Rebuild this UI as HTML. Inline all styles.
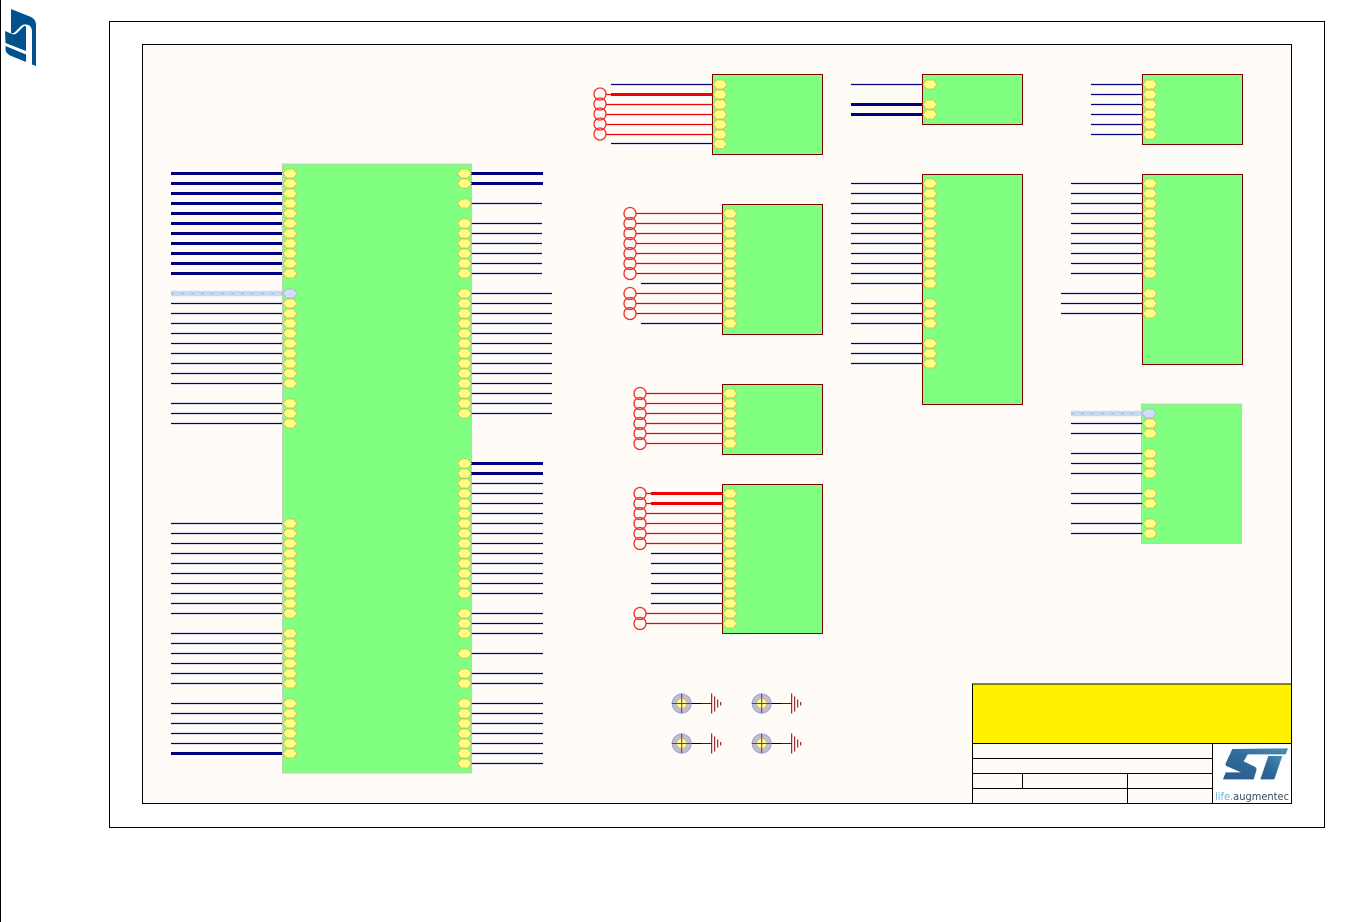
<!DOCTYPE html>
<html><head><meta charset="utf-8"><title>Schematic</title>
<style>html,body{margin:0;padding:0;background:#fff;width:1361px;height:922px;overflow:hidden}svg{display:block}</style></head>
<body>
<svg width="1361" height="922" viewBox="0 0 1361 922" xmlns="http://www.w3.org/2000/svg" fill="none">
<defs>
<linearGradient id="g" x1="0" y1="1" x2="1" y2="0"><stop offset="0" stop-color="#2a5a8a"/><stop offset=".5" stop-color="#2f6c9c"/><stop offset="1" stop-color="#4a8fb4"/></linearGradient>
<path id="p" d="M283 0l3.500-4.500h7l3.500 4.500-3.500 4.500h-7z" fill="#ffff80" stroke="#d4b860" stroke-width=".8"/>
<g id="a2"><use href="#p"/><use href="#p" y="10"/></g>
<g id="a3"><use href="#a2"/><use href="#p" y="20"/></g>
<g id="a5"><use href="#a3"/><use href="#a2" y="30"/></g>
<g id="a6"><use href="#a5"/><use href="#p" y="50"/></g>
<g id="a10"><use href="#a5"/><use href="#a5" y="50"/></g>
<g id="c5"><circle cx="0" cy="0" r="6"/><circle cx="0" cy="10" r="6"/><circle cx="0" cy="20" r="6"/><circle cx="0" cy="30" r="6"/><circle cx="0" cy="40" r="6"/></g>
<g id="gnd">
<circle cx="0" cy="0" r="9.500" fill="#c0c0c0" stroke="#a0a0ec"/>
<circle cx="0" cy="0" r="4.500" fill="#ffff90"/>
<path d="M-10 0H10M0-10V10" stroke="#e01010"/>
<path d="M10 0H20" stroke="#000"/><path d="M20 0H30" stroke="#800000"/>
<path d="M30-10V10M33-7V8M36-4V4M39-1.500V2" stroke="#800000" stroke-width="1"/>
</g>
</defs>
<rect x="0" y="0" width="1" height="922" fill="#000"/>
<rect x="109.500" y="21.500" width="1215" height="806" fill="#fff" stroke="#000"/>
<rect x="142.500" y="44.500" width="1149" height="759" fill="#fffcf8" stroke="#000"/>

<!-- corner logo -->
<g fill="#00528c">
<path d="M11 9L31 17Q36 19.500 36 25V66L32 64.500V32Q32 25 26 24.500Q23 24 20 27L15 32Q13 34 11 33Z"/>
<path d="M5 31L12 34Q15 35 17 33L24 26Q26 25 26 28V51L5.500 43Z"/>
<path d="M5.500 46L26 54.500V62L10 55.500Q5.500 53 5.500 49Z"/>
</g>

<!-- blocks -->
<rect x="282.500" y="164" width="189" height="609" fill="#80ff80" stroke="#c0d0b0"/>
<g fill="#80ff80" stroke="#800000">
<rect x="712.500" y="74.500" width="110" height="80"/>
<rect x="722.500" y="204.500" width="100" height="130"/>
<rect x="722.500" y="384.500" width="100" height="70"/>
<rect x="722.500" y="484.500" width="100" height="149"/>
<rect x="922.500" y="74.500" width="100" height="50"/>
<rect x="922.500" y="174.500" width="100" height="230"/>
<rect x="1142.500" y="74.500" width="100" height="70"/>
<rect x="1142.500" y="174.500" width="100" height="190"/>
</g>
<rect x="1141.500" y="404" width="100" height="139.500" fill="#80ff80" stroke="#c0d0b0"/>

<!-- navy thick wires -->
<path stroke="#000080" stroke-width="3" d="M171 173.500h111m-111 10h111m-111 10h111m-111 10h111m-111 10h111m-111 10h111m-111 10h111m-111 10h111m-111 10h111m-111 10h111m-111 10h111M171 753.500h111M471 173.500h72m-72 10h72M471 463.500h72m-72 10h72M851 104.500h71m-71 10h71"/>
<!-- navy thin wires -->
<path stroke="#000080" stroke-width="1.300" d="M171 303.500h111m-111 10h111m-111 10h111m-111 10h111m-111 10h111m-111 10h111m-111 10h111m-111 10h111m-111 10h111M171 403.500h111m-111 10h111m-111 10h111
M171 523.500h111m-111 10h111m-111 10h111m-111 10h111m-111 10h111m-111 10h111m-111 10h111m-111 10h111m-111 10h111m-111 10h111
M171 633.500h111m-111 10h111m-111 10h111m-111 10h111m-111 10h111m-111 10h111M171 703.500h111m-111 10h111m-111 10h111m-111 10h111m-111 10h111
M471 203.500h71M471 223.500h71m-71 10h71m-71 10h71m-71 10h71m-71 10h71m-71 10h71
M471 293.500h81m-81 10h81m-81 10h81m-81 10h81m-81 10h81m-81 10h81m-81 10h81m-81 10h81m-81 10h81m-81 10h81m-81 10h81m-81 10h81m-81 10h81
M471 483.500h72m-72 10h72m-72 10h72m-72 10h72m-72 10h72m-72 10h72m-72 10h72m-72 10h72m-72 10h72m-72 10h72m-72 10h72m-72 10h72
M471 613.500h72m-72 10h72m-72 10h72M471 653.500h72M471 673.500h72m-72 10h72M471 703.500h72m-72 10h72m-72 10h72m-72 10h72m-72 10h72m-72 10h72m-72 10h72
M611 84.500h101M611 143.500h101
M641 283.500h81M641 323.500h81
M651 553.500h71m-71 10h71m-71 10h71m-71 10h71m-71 10h71m-71 10h71
M851 84.500h71
M851 183.500h71m-71 10h71m-71 10h71m-71 10h71m-71 10h71m-71 10h71m-71 10h71m-71 10h71m-71 10h71m-71 10h71m-71 10h71
M851 303.500h71m-71 10h71m-71 10h71M851 343.500h71m-71 10h71m-71 10h71
M1091 84.500h51m-51 10h51m-51 10h51m-51 10h51m-51 10h51m-51 10h51
M1071 183.500h71m-71 10h71m-71 10h71m-71 10h71m-71 10h71m-71 10h71m-71 10h71m-71 10h71m-71 10h71m-71 10h71
M1061 293.500h81m-81 10h81m-81 10h81
M1071 423.500h71m-71 10h71M1071 453.500h71m-71 10h71m-71 10h71M1071 493.500h71m-71 10h71M1071 523.500h71m-71 10h71"/>
<!-- red wires -->
<path stroke="#f00000" stroke-width="3" d="M611 94.500h101M651 493.500h71M651 503.500h71"/>
<path stroke="#f00000" stroke-width="1.300" d="M606 94.500h5M606 104.500h106m-106 10h106m-106 10h106m-106 10h106
M636 213.500h86m-86 10h86m-86 10h86m-86 10h86m-86 10h86m-86 10h86m-86 10h86M636 293.500h86m-86 10h86m-86 10h86
M646 393.500h76m-76 10h76m-76 10h76m-76 10h76m-76 10h76m-76 10h76
M646 493.500h5m-5 10h5M646 513.500h76m-76 10h76m-76 10h76m-76 10h76M646 613.500h76m-76 10h76"/>
<!-- red circles -->
<g stroke="#f03030" stroke-width="1.300">
<use href="#c5" x="600" y="94"/>
<use href="#c5" x="630" y="213.500"/><circle cx="630" cy="263.500" r="6"/><circle cx="630" cy="273.500" r="6"/>
<circle cx="630" cy="293.500" r="6"/><circle cx="630" cy="303.500" r="6"/><circle cx="630" cy="313.500" r="6"/>
<use href="#c5" x="640" y="393.500"/><circle cx="640" cy="443.500" r="6"/>
<use href="#c5" x="640" y="493.500"/><circle cx="640" cy="543.500" r="6"/>
<circle cx="640" cy="613.500" r="6"/><circle cx="640" cy="623.500" r="6"/>
</g>

<!-- buses -->
<path stroke="#c8d8f8" stroke-width="5.500" d="M171 293.500h111M1071 413.500h71"/>
<path stroke="#a8b4c8" stroke-width="1" stroke-dasharray="3 7" d="M171 293.500h111M1071 413.500h71"/>

<!-- ports -->
<use href="#a10" y="173.500"/><use href="#p" y="273.500"/>
<use href="#a5" y="303.500"/><use href="#a3" y="353.500"/><use href="#p" y="383.500"/><use href="#a3" y="403.500"/>
<use href="#a10" y="523.500"/><use href="#a6" y="633.500"/><use href="#a5" y="703.500"/><use href="#p" y="753.500"/>
<g transform="translate(174.500 0)">
<use href="#a2" y="173.500"/><use href="#p" y="203.500"/><use href="#a6" y="223.500"/>
<use href="#a10" y="293.500"/><use href="#a3" y="393.500"/>
<use href="#a10" y="463.500"/><use href="#a2" y="563.500"/><use href="#a2" y="583.500"/>
<use href="#a3" y="613.500"/><use href="#p" y="653.500"/><use href="#a2" y="673.500"/>
<use href="#a5" y="703.500"/><use href="#a2" y="753.500"/>
</g>
<g transform="translate(430 0)"><use href="#a6" y="84.500"/><use href="#p" y="144"/></g>
<g transform="translate(440 0)">
<use href="#a10" y="213.500"/><use href="#a2" y="313.500"/>
<use href="#a6" y="393.500"/>
<use href="#a10" y="493.500"/><use href="#a3" y="593.500"/><use href="#p" y="623.500"/>
</g>
<g transform="translate(640 0)">
<use href="#p" y="84.500"/><use href="#a2" y="104.500"/>
<use href="#a10" y="183.500"/><use href="#p" y="283.500"/>
<use href="#a3" y="303.500"/><use href="#a3" y="343.500"/>
</g>
<g transform="translate(860 0)">
<use href="#a6" y="84.500"/>
<use href="#a10" y="183.500"/><use href="#a3" y="293.500"/>
<use href="#a2" y="423.500"/><use href="#a3" y="453.500"/><use href="#a2" y="493.500"/><use href="#a2" y="523.500"/>
</g>
<path d="M283 293.500l3.500-4.500h7l3.500 4.500-3.500 4.500h-7z" fill="#d0e0fc" stroke="#b0bccc"/>
<path d="M1142 413.500l3.500-4.500h7l3.500 4.500-3.500 4.500h-7z" fill="#d0e0fc" stroke="#b0bccc"/>

<!-- grounds -->
<use href="#gnd" x="681.700" y="703.500"/><use href="#gnd" x="761.700" y="703.500"/>
<use href="#gnd" x="681.700" y="743.500"/><use href="#gnd" x="761.700" y="743.500"/>

<!-- title block -->
<rect x="972.500" y="684" width="319" height="59.500" fill="#fff200" stroke="#000"/>
<path stroke="#000" d="M972.500 684V803M972.500 758.500H1212M972.500 773.500H1212M972.500 788.500H1212M1212.500 743.500V803M1022.500 773.500V788M1127.500 773.500V803"/>
<rect x="1213" y="744" width="78" height="59" fill="#fff"/>
<g transform="translate(1213 744) scale(.3333)" fill="url(#g)">
<path d="M58 15L225 13L218 31H104L92 52L125 68Q132 72 130 80L122 106H30L38 85H84L40 66Q36 62 38 58Z"/>
<path d="M166 36H208L184 106H142Z"/>
</g>
<text x="1215" y="800" font-family="DejaVu Sans, sans-serif" font-size="10.500" textLength="74" lengthAdjust="spacingAndGlyphs" fill="#3c4a5a"><tspan fill="#6fb0dc">life.</tspan>augmentec</text>
</svg>
</body></html>
